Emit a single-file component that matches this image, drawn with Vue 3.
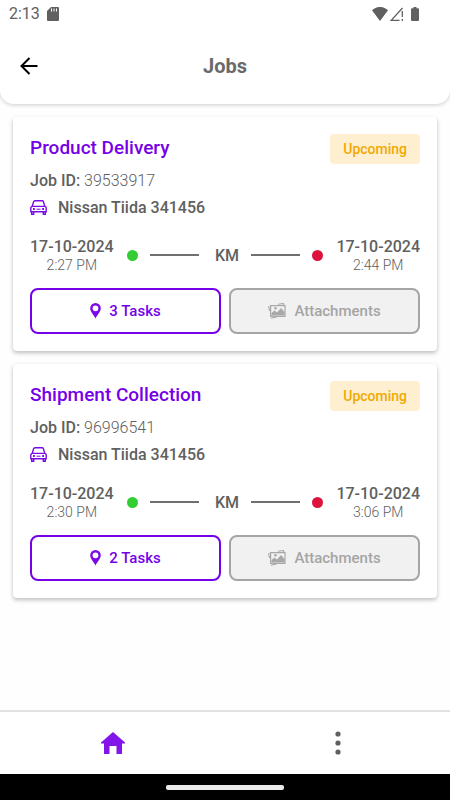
<script setup>
import { ref } from 'vue';

const jobs = ref([
  {
    id: '39533917',
    title: 'Product Delivery',
    status: 'Upcoming',
    vehicle: 'Nissan Tiida 341456',
    start: { date: '17-10-2024', time: '2:27 PM' },
    end: { date: '17-10-2024', time: '2:44 PM' },
    tasks: 3
  },
  {
    id: '96996541',
    title: 'Shipment Collection',
    status: 'Upcoming',
    vehicle: 'Nissan Tiida 341456',
    start: { date: '17-10-2024', time: '2:30 PM' },
    end: { date: '17-10-2024', time: '3:06 PM' },
    tasks: 2
  }
])
</script>

<template>
  <div class="screen">
    <header class="header">
      <div class="status-bar">
        <span class="clock">2:13</span>
        <svg class="sd-icon" width="12" height="14" viewBox="0 0 12 14">
          <path d="M4 0h7a1 1 0 0 1 1 1v12a1 1 0 0 1-1 1H1a1 1 0 0 1-1-1V4z" fill="#606060" />
          <path d="M4.5 1.5v3M7 1.5v3M9.5 1.5v3" stroke="#fff" stroke-width="1" />
        </svg>
        <div class="status-right">
          <svg width="16" height="14" viewBox="0 0 16 14">
            <path d="M0 3.2C4.5-1.1 11.5-1.1 16 3.2L8 14z" fill="#606060" />
          </svg>
          <svg class="signal" width="13" height="14" viewBox="0 0 13 14">
            <path d="M12.5 1L1.2 13.3H9.5" fill="none" stroke="#606060" stroke-width="1.3" />
            <path d="M12.3 4v6M12.3 12v2" stroke="#606060" stroke-width="1.3" />
          </svg>
          <svg class="battery" width="8" height="14" viewBox="0 0 8 14">
            <path d="M2.5 0h3v1.3H7a1 1 0 0 1 1 1V13a1 1 0 0 1-1 1H1a1 1 0 0 1-1-1V2.3a1 1 0 0 1 1-1h1.5z" fill="#606060" />
          </svg>
        </div>
      </div>
      <div class="title-bar">
        <button class="back" type="button" aria-label="Back">
          <svg width="18" height="18" viewBox="0 0 18 18">
            <path d="M9.5 1L1.5 9l8 8M1.5 9H17.5" fill="none" stroke="#000" stroke-width="2" />
          </svg>
        </button>
        <h1>Jobs</h1>
      </div>
    </header>

    <main class="jobs">
      <article v-for="job in jobs" :key="job.id" class="card">
        <div class="card-top">
          <h2>{{ job.title }}</h2>
          <span class="badge">{{ job.status }}</span>
        </div>
        <p class="row"><b>Job ID:</b> <span class="job-id">{{ job.id }}</span></p>
        <p class="row vehicle">
          <svg width="17" height="15" viewBox="0 0 17 15" fill="none" stroke="#7a0be8" stroke-width="1.4">
            <path d="M2.2 6.4L3.6 1.7Q3.9.7 4.9.7h7.2q1 0 1.3 1l1.4 4.7" />
            <path d="M2.6 6.4h11.8q1.8 0 1.8 1.8v3.6H.8V8.200q0-1.800 1.800-1.800z" />
            <path d="M1.700 11.800v2.400h2v-2.400M13.300 11.800v2.400h2v-2.400" />
            <path d="M3 9h1.800M12.200 9h1.800" stroke-width="1.800" />
            <path d="M6.500 9.200h4" stroke-width="1" />
          </svg>
          <b>{{ job.vehicle }}</b>
        </p>

        <div class="route">
          <div class="stop">
            <b>{{ job.start.date }}</b>
            <span>{{ job.start.time }}</span>
          </div>
          <div class="track">
            <i class="dot green"></i>
            <i class="line"></i>
            <b class="distance"> KM</b>
            <i class="line"></i>
            <i class="dot red"></i>
          </div>
          <div class="stop">
            <b>{{ job.end.date }}</b>
            <span>{{ job.end.time }}</span>
          </div>
        </div>

        <div class="actions">
          <button class="btn tasks" type="button">
            <svg width="11" height="16" viewBox="0 0 11 16">
              <path fill-rule="evenodd" d="M5.5 0A5.3 5.3 0 0 0 .2 5.300C.2 9 3.600 11.500 5.500 15.500 7.400 11.500 10.800 9 10.800 5.300A5.300 5.300 0 0 0 5.500 0zM5.500 2.400a2.900 2.900 0 1 1 0 5.800 2.900 2.900 0 0 1 0-5.800z" fill="#7a0be8" />
            </svg>
            {{ job.tasks }} Tasks
          </button>
          <button class="btn attachments" type="button" disabled>
            <svg width="18" height="16" viewBox="0 0 18 16">
              <path d="M2.600 2.600h14.400v10.800H2.600z" fill="none" stroke="#a8a8a8" stroke-width="1.200" />
              <path d="M3.500 12.500V10L6.500 7.500l2.500 2 4-4.500 3.500 4v3.500z" fill="#a8a8a8" />
              <circle cx="7.500" cy="5.200" r="1.300" fill="#a8a8a8" />
              <path d="M10 1.300L15.500.5l.3 1.500M1.400 3.500L.6 3.700 1.600 8M3 15.200l5.500-1.200" fill="none" stroke="#a8a8a8" stroke-width="1.100" />
            </svg>
            Attachments
          </button>
        </div>
      </article>
    </main>

    <nav class="tabs">
      <a href="#" aria-label="Home">
        <svg width="24" height="22" viewBox="0 0 24 22">
          <path d="M12 0L24 10.500V11.500H21V22H15.500V14H8.500V22H3V11.500H0V10.500z" fill="#8415ea" />
        </svg>
      </a>
      <a href="#" aria-label="More">
        <svg width="6" height="24" viewBox="0 0 6 24" fill="#606060">
          <circle cx="3" cy="3" r="2.600" />
          <circle cx="3" cy="12" r="2.600" />
          <circle cx="3" cy="21" r="2.600" />
        </svg>
      </a>
    </nav>
    <footer class="system-bar"><i></i></footer>
  </div>
</template>

<style>
body {
  margin: 0;
  background: #fefefe;
}
</style>

<style scoped>
.screen {
  min-height: 100vh;
  display: flex;
  flex-direction: column;
  font-family: Roboto, sans-serif;
  font-size: 16px;
  color: #606060;
}

b, h1, h2 {
  font-weight: 500;
}

h1, h2, p {
  margin: 0;
}

svg {
  display: block;
  flex: none;
}

.header {
  background: #fff;
  border-radius: 0 0 14px 14px;
  box-shadow: 0 1px 4px rgba(0, 0, 0, 0.2);
}

.status-bar {
  display: flex;
  align-items: center;
  height: 27px;
  padding: 0 31px 0 9px;
}

.clock {
  font-size: 16px;
  font-weight: 400;
}

.sd-icon {
  margin-left: 7px;
}

.status-right {
  display: flex;
  margin-left: auto;
}

.signal {
  margin-left: 2px;
}

.battery {
  margin-left: 8px;
}

.title-bar {
  display: grid;
  grid-template-columns: 40px 1fr 40px;
  align-items: center;
  height: 77px;
}

.back {
  border: 0;
  background: none;
  padding: 0 0 0 20px;
}

h1 {
  font-size: 20px;
  font-weight: 700;
  text-align: center;
  color: #6a6a6a;
}

.jobs {
  flex: 1;
  display: flex;
  flex-direction: column;
  gap: 13px;
  padding: 13px;
}

.card {
  padding: 17px;
  background: #fff;
  border-radius: 4px;
  box-shadow: 0 2px 4px rgba(0, 0, 0, 0.26);
}

.card-top {
  display: flex;
  justify-content: space-between;
  height: 33px;
}

h2 {
  font-size: 19px;
  line-height: 27px;
  color: #7600e8;
}

.badge {
  height: 30px;
  line-height: 31px;
  padding: 0 13px;
  border-radius: 4px;
  background: #feefd1;
  color: #f2a900;
  font-size: 14px;
  font-weight: 500;
}

.row {
  line-height: 27px;
}

.job-id {
  font-weight: 300;
}

.vehicle {
  display: flex;
  align-items: center;
  gap: 11px;
}

.route {
  display: flex;
  align-items: flex-start;
  margin-top: 16px;
}

.stop {
  text-align: center;
  line-height: 19px;
}

.stop b {
  display: block;
}

.stop span {
  display: block;
  font-size: 14px;
  font-weight: 300;
}

.track {
  flex: 1;
  display: flex;
  align-items: center;
  gap: 12px;
  height: 36px;
  padding: 0 13px;
}

.dot {
  width: 11px;
  height: 11px;
  border-radius: 50%;
}

.green {
  background: #32cd32;
}

.red {
  background: #dc143c;
}

.line {
  flex: 1;
  height: 2px;
  background: #707070;
}

.distance {
  white-space: pre;
}

.actions {
  display: grid;
  grid-template-columns: 1fr 1fr;
  gap: 8px;
  margin-top: 13px;
}

.btn {
  display: flex;
  align-items: center;
  justify-content: center;
  gap: 8px;
  height: 46px;
  padding: 0;
  border: 2px solid #7600e8;
  border-radius: 8px;
  background: #fff;
  color: #7600e8;
  font: 500 15px Roboto, sans-serif;
}

.attachments {
  border-color: #a5a5a5;
  background: #f1f1f1;
  color: #a5a5a5;
}

.tabs {
  display: grid;
  grid-template-columns: 1fr 1fr;
  height: 62px;
  border-top: 2px solid #e2e2e2;
  background: #fff;
}

.tabs a {
  display: flex;
  align-items: center;
  justify-content: center;
}

.system-bar {
  display: flex;
  align-items: center;
  justify-content: center;
  height: 26px;
  background: #000;
}

.system-bar i {
  width: 118px;
  height: 5px;
  border-radius: 2px;
  background: #ebebeb;
}
</style>
